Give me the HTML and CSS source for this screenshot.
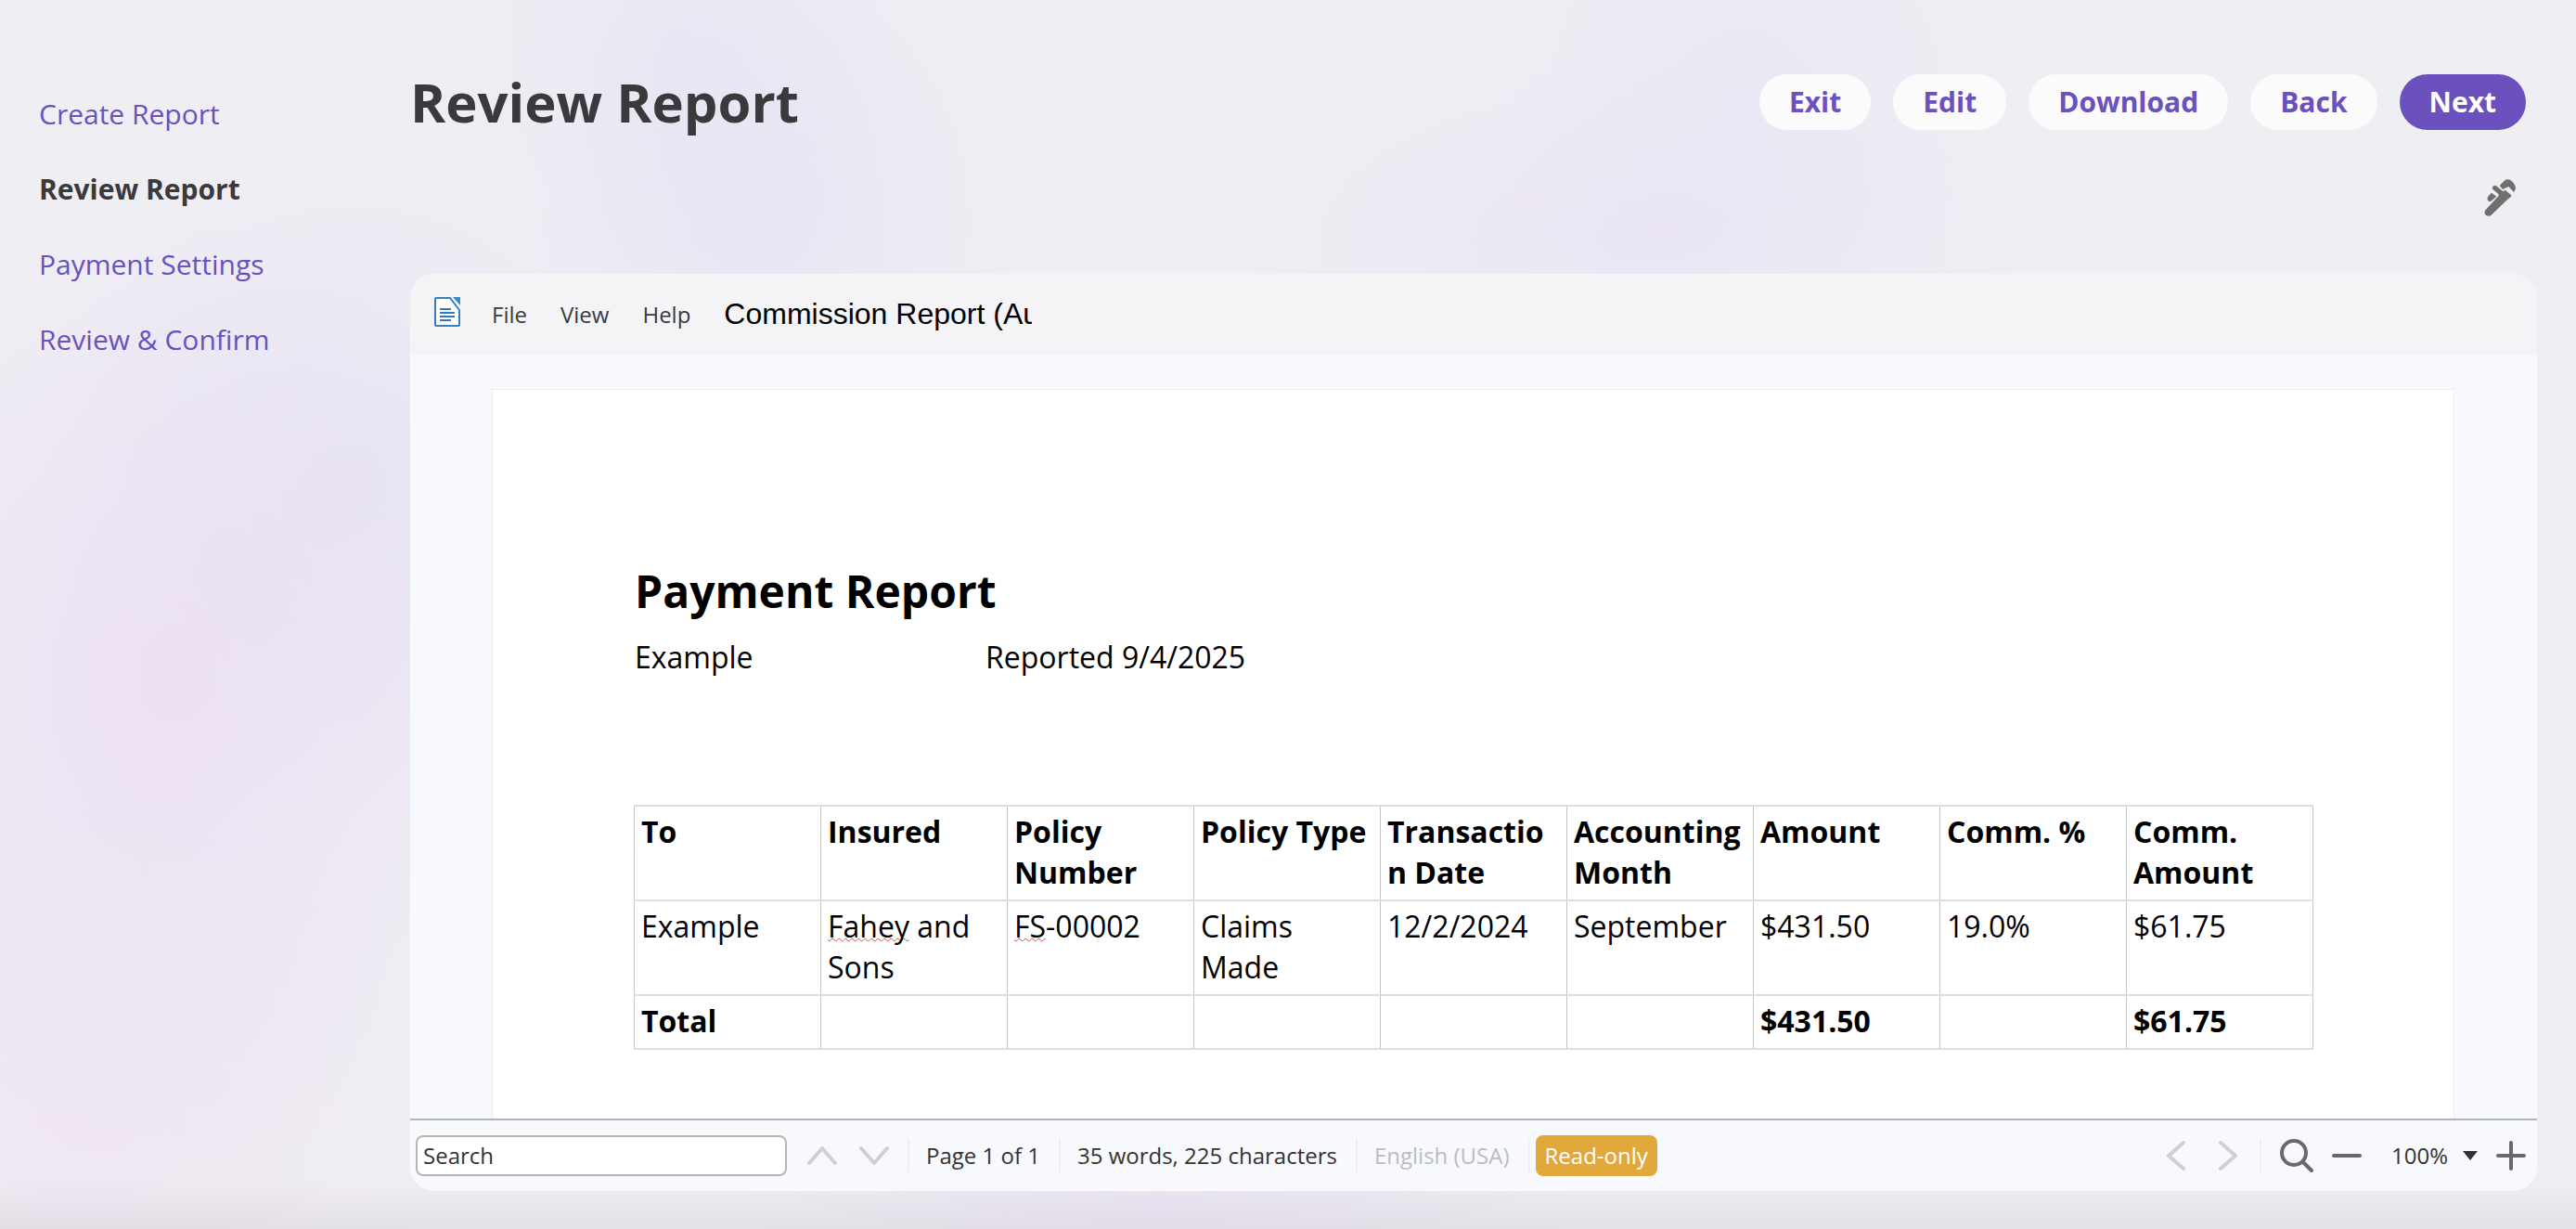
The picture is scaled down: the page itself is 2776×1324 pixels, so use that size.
FILE: index.html
```html
<!DOCTYPE html>
<html lang="en">
<head>
  <meta charset="UTF-8">
  <meta name="viewport" content="width=device-width, initial-scale=1.0">
  <title>Review Report</title>
  <link rel="stylesheet" href="styles.css">
</head>
<body>
  <nav class="steps">
    <a href="#create">Create Report</a>
    <a href="#review" class="current">Review Report</a>
    <a href="#payment">Payment Settings</a>
    <a href="#confirm">Review &amp; Confirm</a>
  </nav>

  <main class="main">
    <header class="page-header">
      <h1>Review Report</h1>
      <div class="actions">
        <button type="button" class="btn">Exit</button>
        <button type="button" class="btn">Edit</button>
        <button type="button" class="btn">Download</button>
        <button type="button" class="btn">Back</button>
        <button type="button" class="btn primary">Next</button>
      </div>
    </header>

    <div class="tools">
      <button type="button" class="icon-btn" aria-label="Tools">
        <svg width="34" height="40" viewBox="51 39 102 120" fill="#6f6f6f">
          <path d="M54 140 97 94Q100 89 96 86L80 73Q75 67 80 62 86 57 92 62L112 79 119 74 138 90Q141 98 130 101L74 155Q66 161 57 156 50 149 54 140z"/>
          <path d="M101 60 116 44Q125 37 136 42 152 53 153 70L147 81 130 63Q127 63 126 67L121 66 112 73z"/>
          <path d="M75 83 91 95 73 110Q65 113 62 106 60 99 65 94z"/>
        </svg>
      </button>
    </div>

    <section class="editor">
      <div class="menubar">
        <svg class="doc-icon" width="28" height="32" viewBox="0 0 28 32">
          <path d="M2 1h15l10 13v16a1 1 0 0 1-1 1H2a1 1 0 0 1-1-1V2a1 1 0 0 1 1-1z" fill="#fff" stroke="#3780bf" stroke-width="2"/>
          <path d="M20 0h8v9z" fill="#3b86c6"/>
          <path d="M6 13h12M6 17h16M6 21h16M6 25h12" stroke="#3079ba" stroke-width="2"/>
        </svg>
        <button type="button" class="menu">File</button>
        <button type="button" class="menu">View</button>
        <button type="button" class="menu">Help</button>
        <input class="doc-name" type="text" aria-label="Document name" value="Commission Report (August)">
      </div>

      <div class="canvas">
        <article class="sheet">
          <h2>Payment Report</h2>
          <p class="meta"><span>Example</span><span>Reported 9/4/2025</span></p>
          <table>
            <thead>
              <tr>
                <th>To</th><th>Insured</th><th>Policy Number</th><th>Policy Type</th><th>Transaction Date</th>
                <th>Accounting Month</th><th>Amount</th><th>Comm. %</th><th>Comm. Amount</th>
              </tr>
            </thead>
            <tbody>
              <tr>
                <td>Example</td><td><span class="typo">Fahey</span> and Sons</td><td><span class="typo">FS</span>-00002</td>
                <td>Claims Made</td><td>12/2/2024</td><td>September</td><td>$431.50</td><td>19.0%</td><td>$61.75</td>
              </tr>
            </tbody>
            <tfoot>
              <tr><td>Total</td><td></td><td></td><td></td><td></td><td></td><td>$431.50</td><td></td><td>$61.75</td></tr>
            </tfoot>
          </table>
        </article>
      </div>

      <footer class="statusbar">
        <input class="search" type="text" placeholder="Search" aria-label="Search">
        <button type="button" class="icon-btn faded" aria-label="Previous match">
          <svg width="32" height="20" viewBox="0 0 32 20"><path d="m2 18 14-16 14 16"/></svg>
        </button>
        <button type="button" class="icon-btn faded" aria-label="Next match">
          <svg width="32" height="20" viewBox="0 0 32 20"><path d="m2 2 14 16L30 2"/></svg>
        </button>
        <span class="cell">Page 1 of 1</span>
        <span class="cell">35 words, 225 characters</span>
        <span class="cell muted">English (USA)</span>
        <span class="cell last"><span class="badge">Read-only</span></span>
        <div class="zoom">
          <button type="button" class="icon-btn faded page-nav" aria-label="Previous page">
            <svg width="20" height="32" viewBox="0 0 20 32"><path d="M18 2 2 16l16 14"/></svg>
          </button>
          <button type="button" class="icon-btn faded page-nav" aria-label="Next page">
            <svg width="20" height="32" viewBox="0 0 20 32"><path d="m2 2 16 14L2 30"/></svg>
          </button>
          <span class="rule"></span>
          <button type="button" class="icon-btn" aria-label="Find">
            <svg width="36" height="36" viewBox="0 0 36 36"><circle cx="15" cy="15" r="13"/><path d="m25 25 9 9"/></svg>
          </button>
          <button type="button" class="icon-btn" aria-label="Zoom out">
            <svg width="32" height="32" viewBox="0 0 32 32"><path d="M2 16h28"/></svg>
          </button>
          <button type="button" class="level">100%
            <svg width="16" height="10" viewBox="0 0 16 10"><path d="M0 0h16L8 10z"/></svg>
          </button>
          <button type="button" class="icon-btn" aria-label="Zoom in">
            <svg width="32" height="32" viewBox="0 0 32 32"><path d="M2 16h28M16 2v28"/></svg>
          </button>
        </div>
      </footer>
    </section>
  </main>
</body>
</html>
```
FILE: styles.css
```css
* {
  box-sizing: border-box;
}
body {
  margin: 0;
  min-height: 100vh;
  display: grid;
  grid-template-columns: 442px 1fr;
  font-family: "Open Sans", "Noto Sans", sans-serif;
  font-size: 30px;
  color: #3a3a3c;
  background:
    linear-gradient(to top, rgba(120, 115, 115, 0.1), transparent 50px),
    radial-gradient(ellipse 240px 300px at 730px 60px, rgba(228, 222, 245, 0.4), transparent),
    radial-gradient(ellipse 260px 320px at 830px 240px, rgba(228, 220, 243, 0.5), transparent),
    radial-gradient(ellipse 280px 260px at 1880px 100px, rgba(230, 222, 245, 0.4), transparent),
    radial-gradient(ellipse 420px 200px at 1760px 260px, rgba(230, 222, 244, 0.5), transparent),
    radial-gradient(ellipse 340px 360px at 380px 520px, rgba(226, 220, 243, 0.5), transparent),
    radial-gradient(ellipse 420px 520px at 180px 740px, rgba(236, 220, 243, 0.7), transparent),
    radial-gradient(ellipse 380px 380px at 90px 1210px, rgba(240, 226, 242, 0.6), transparent),
    radial-gradient(ellipse 460px 100px at 1250px 1290px, rgba(232, 220, 246, 0.5), transparent),
    #efeef3;
}
button,
input {
  font: inherit;
  color: inherit;
  border: 0;
  padding: 0;
  background: none;
}
svg {
  display: block;
}

/* Left navigation */
.steps {
  padding: 102px 42px;
  display: flex;
  flex-direction: column;
  gap: 40px;
}
.steps a {
  color: #6a51bd;
  line-height: 41px;
  text-decoration: none;
}
.steps .current {
  color: #3a3a3c;
  font-weight: 700;
}

.main {
  height: 100vh;
  padding: 80px 42px 41px 0;
  display: flex;
  flex-direction: column;
}
.page-header {
  padding-right: 12px;
  display: flex;
  justify-content: space-between;
  align-items: center;
  height: 60px;
}
.page-header h1 {
  margin: 0;
  font-size: 58px;
  line-height: 60px;
}
.actions {
  display: flex;
  gap: 24px;
}
.btn {
  height: 60px;
  padding: 0 32px 2px;
  border-radius: 30px;
  background: #fbfbfc;
  color: #6a51bd;
  font-weight: 700;
}
.btn.primary {
  background: #6a51bd;
  color: #fff;
}
.tools {
  height: 155px;
  padding: 53px 23px 0 0;
  display: flex;
  justify-content: flex-end;
  align-items: flex-start;
}

/* Document editor */
.editor {
  flex: 1;
  min-height: 0;
  display: flex;
  flex-direction: column;
  border-radius: 26px;
  overflow: hidden;
  background: #f8f9fc;
}
.menubar {
  height: 87px;
  padding: 0 26px;
  display: flex;
  align-items: center;
  gap: 36px;
  background: #f4f4f7;
  font-size: 24px;
}
.doc-icon {
  margin-right: -2px;
  margin-bottom: 6px;
}
.doc-name {
  width: 332px;
  color: #000;
  font-family: "Liberation Sans", sans-serif;
  font-size: 32px;
}
.canvas {
  flex: 1;
  min-height: 0;
  padding: 37px 89px 0 88px;
  overflow: hidden;
}
.sheet {
  height: 1200px;
  padding: 183px 151px 0 152px;
  border: 1px solid #ebecee;
  background: #fff;
  color: #000;
  font-size: 32px;
}
.sheet h2 {
  margin: 0;
  padding-left: 1px;
  font-size: 48px;
  line-height: 68px;
}
.meta {
  margin: 14px 0 137px;
  padding-left: 1px;
  display: grid;
  grid-template-columns: 378px 1fr;
  line-height: 45px;
}
table {
  width: 100%;
  table-layout: fixed;
  border-collapse: collapse;
  line-height: 44px;
}
th,
td {
  height: 58px;
  padding: 5px 7px 7px;
  border: 1px solid #c4c4c4;
  border-width: 2px 1px;
  border-top-color: #dedede;
  border-bottom-color: #dedede;
  text-align: left;
  vertical-align: top;
  word-break: break-word;
}
tfoot td {
  font-weight: 700;
}
.typo {
  text-decoration: underline wavy #f0453a 1px;
  text-underline-offset: 0;
  text-decoration-skip-ink: none;
}

/* Status bar */
.statusbar {
  height: 78px;
  padding: 0 12px 1px 6px;
  border-top: 2px solid #b1b5b7;
  display: flex;
  align-items: center;
  font-size: 24px;
  color: #333;
}
.search {
  width: 400px;
  height: 44px;
  margin-right: 22px;
  padding: 0 6px;
  border: 2px solid #b5b5b5;
  border-radius: 8px;
  background: #fff;
}
.search::placeholder {
  color: #333;
  opacity: 1;
}
.icon-btn path,
.icon-btn circle {
  stroke-linecap: round;
}
.statusbar .icon-btn svg {
  fill: none;
  stroke: #696969;
  stroke-width: 4;
  stroke-linejoin: round;
}
.statusbar .faded svg {
  stroke: #d0d0d2;
}
.faded + .faded {
  margin-left: 24px;
}
.cell {
  height: 36px;
  margin-left: 20px;
  padding-left: 18px;
  border-left: 2px solid #eeeff1;
  display: flex;
  align-items: center;
}
.muted {
  color: #bcbdbf;
}
.cell.last {
  padding-left: 6px;
}
.badge {
  height: 44px;
  padding: 0 10px;
  border-radius: 8px;
  background: #e2a83c;
  color: #fff;
  line-height: 44px;
}
.zoom {
  margin-left: auto;
  display: flex;
  align-items: center;
  gap: 20px;
}
.page-nav + .page-nav {
  margin-left: 16px;
}
.rule {
  width: 2px;
  height: 36px;
  margin-left: 4px;
  background: #eeeff1;
}
.level {
  margin: 0 0 0 12px;
  display: flex;
  align-items: center;
  gap: 16px;
}
.level svg {
  fill: #333;
}
```
